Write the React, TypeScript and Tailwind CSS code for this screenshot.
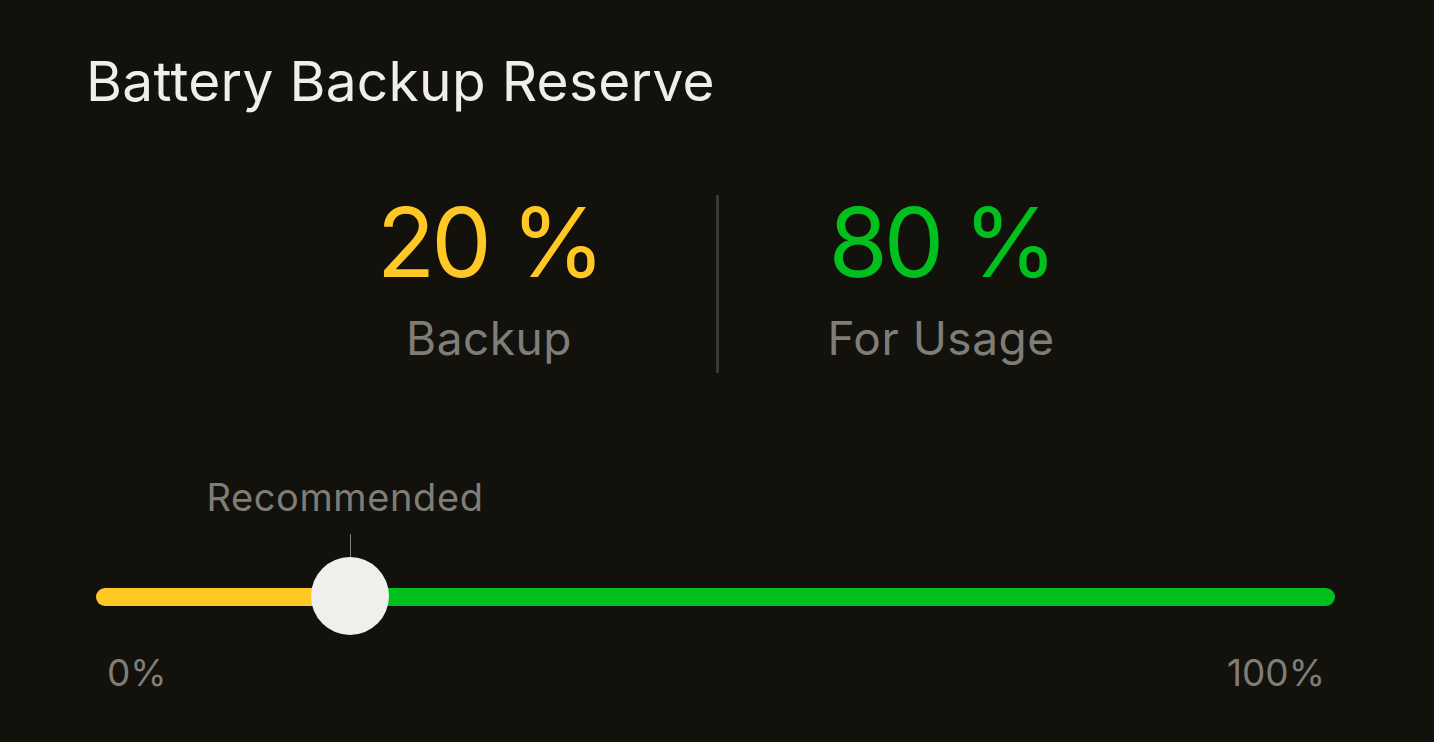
import React from "react";

export default function App() {
  const value = 20;
  const trackW = 1239;
  const thumbX = 254; // px from track left
  return (
    <div
      className="w-[1434px] h-[742px] bg-[#13110b] overflow-hidden"
      style={{ fontFamily: "Inter, 'Noto Sans', sans-serif" }}
    >
      <div className="pl-[86px] pt-[54px]">
        <h1 className="text-[55px] leading-none text-[#efeeea] font-normal tracking-[0.3px]">
          Battery Backup Reserve
        </h1>
      </div>

      <div className="mt-[86px] ml-[262px] flex">
        <div className="w-[454px] flex flex-col items-center">
          <div className="text-[96px] leading-none text-[#ffc824] mt-[-1px] tracking-[-4px]">{value} %</div>
          <div className="text-[46px] leading-none text-[#7f7d78] mt-[25px] tracking-[0.5px]">Backup</div>
        </div>
        <div className="w-[3px] h-[178px] bg-[#3a3835]" />
        <div className="w-[444px] flex flex-col items-center">
          <div className="text-[96px] leading-none text-[#00c01d] mt-[-1px] tracking-[-4px]">{100 - value} %</div>
          <div className="text-[46px] leading-none text-[#7f7d78] mt-[25px] tracking-[0.5px]">For Usage</div>
        </div>
      </div>

      <div className="ml-[96px] mt-[106px] w-[1239px] relative">
        <div className="h-[110px] relative">
          <div
            className="absolute top-[-1px] -translate-x-1/2 text-[38px] leading-none text-[#7f7d78] whitespace-nowrap tracking-[0.6px]"
            style={{ left: thumbX - 5 }}
          >
            Recommended
          </div>
          <div
            className="absolute top-[55px] w-[1px] h-[30px] bg-[#7f7d78]"
            style={{ left: thumbX }}
          />
          <div className="absolute top-[109px] left-0 right-0 h-[18px] flex">
            <div
              className="h-full bg-[#ffc824] rounded-l-full"
              style={{ width: thumbX }}
            />
            <div className="h-full flex-1 bg-[#00c01d] rounded-r-full" />
          </div>
          <div
            className="absolute top-[78px] w-[78px] h-[78px] -translate-x-1/2 rounded-full bg-[#efefeb]"
            style={{ left: thumbX }}
          />
        </div>
        <div className="mt-[65px] pl-[11px] pr-[10px] flex justify-between text-[37px] leading-none text-[#7f7d78]" style={{ width: trackW }}>
          <span>0%</span>
          <span>100%</span>
        </div>
      </div>
    </div>
  );
}
